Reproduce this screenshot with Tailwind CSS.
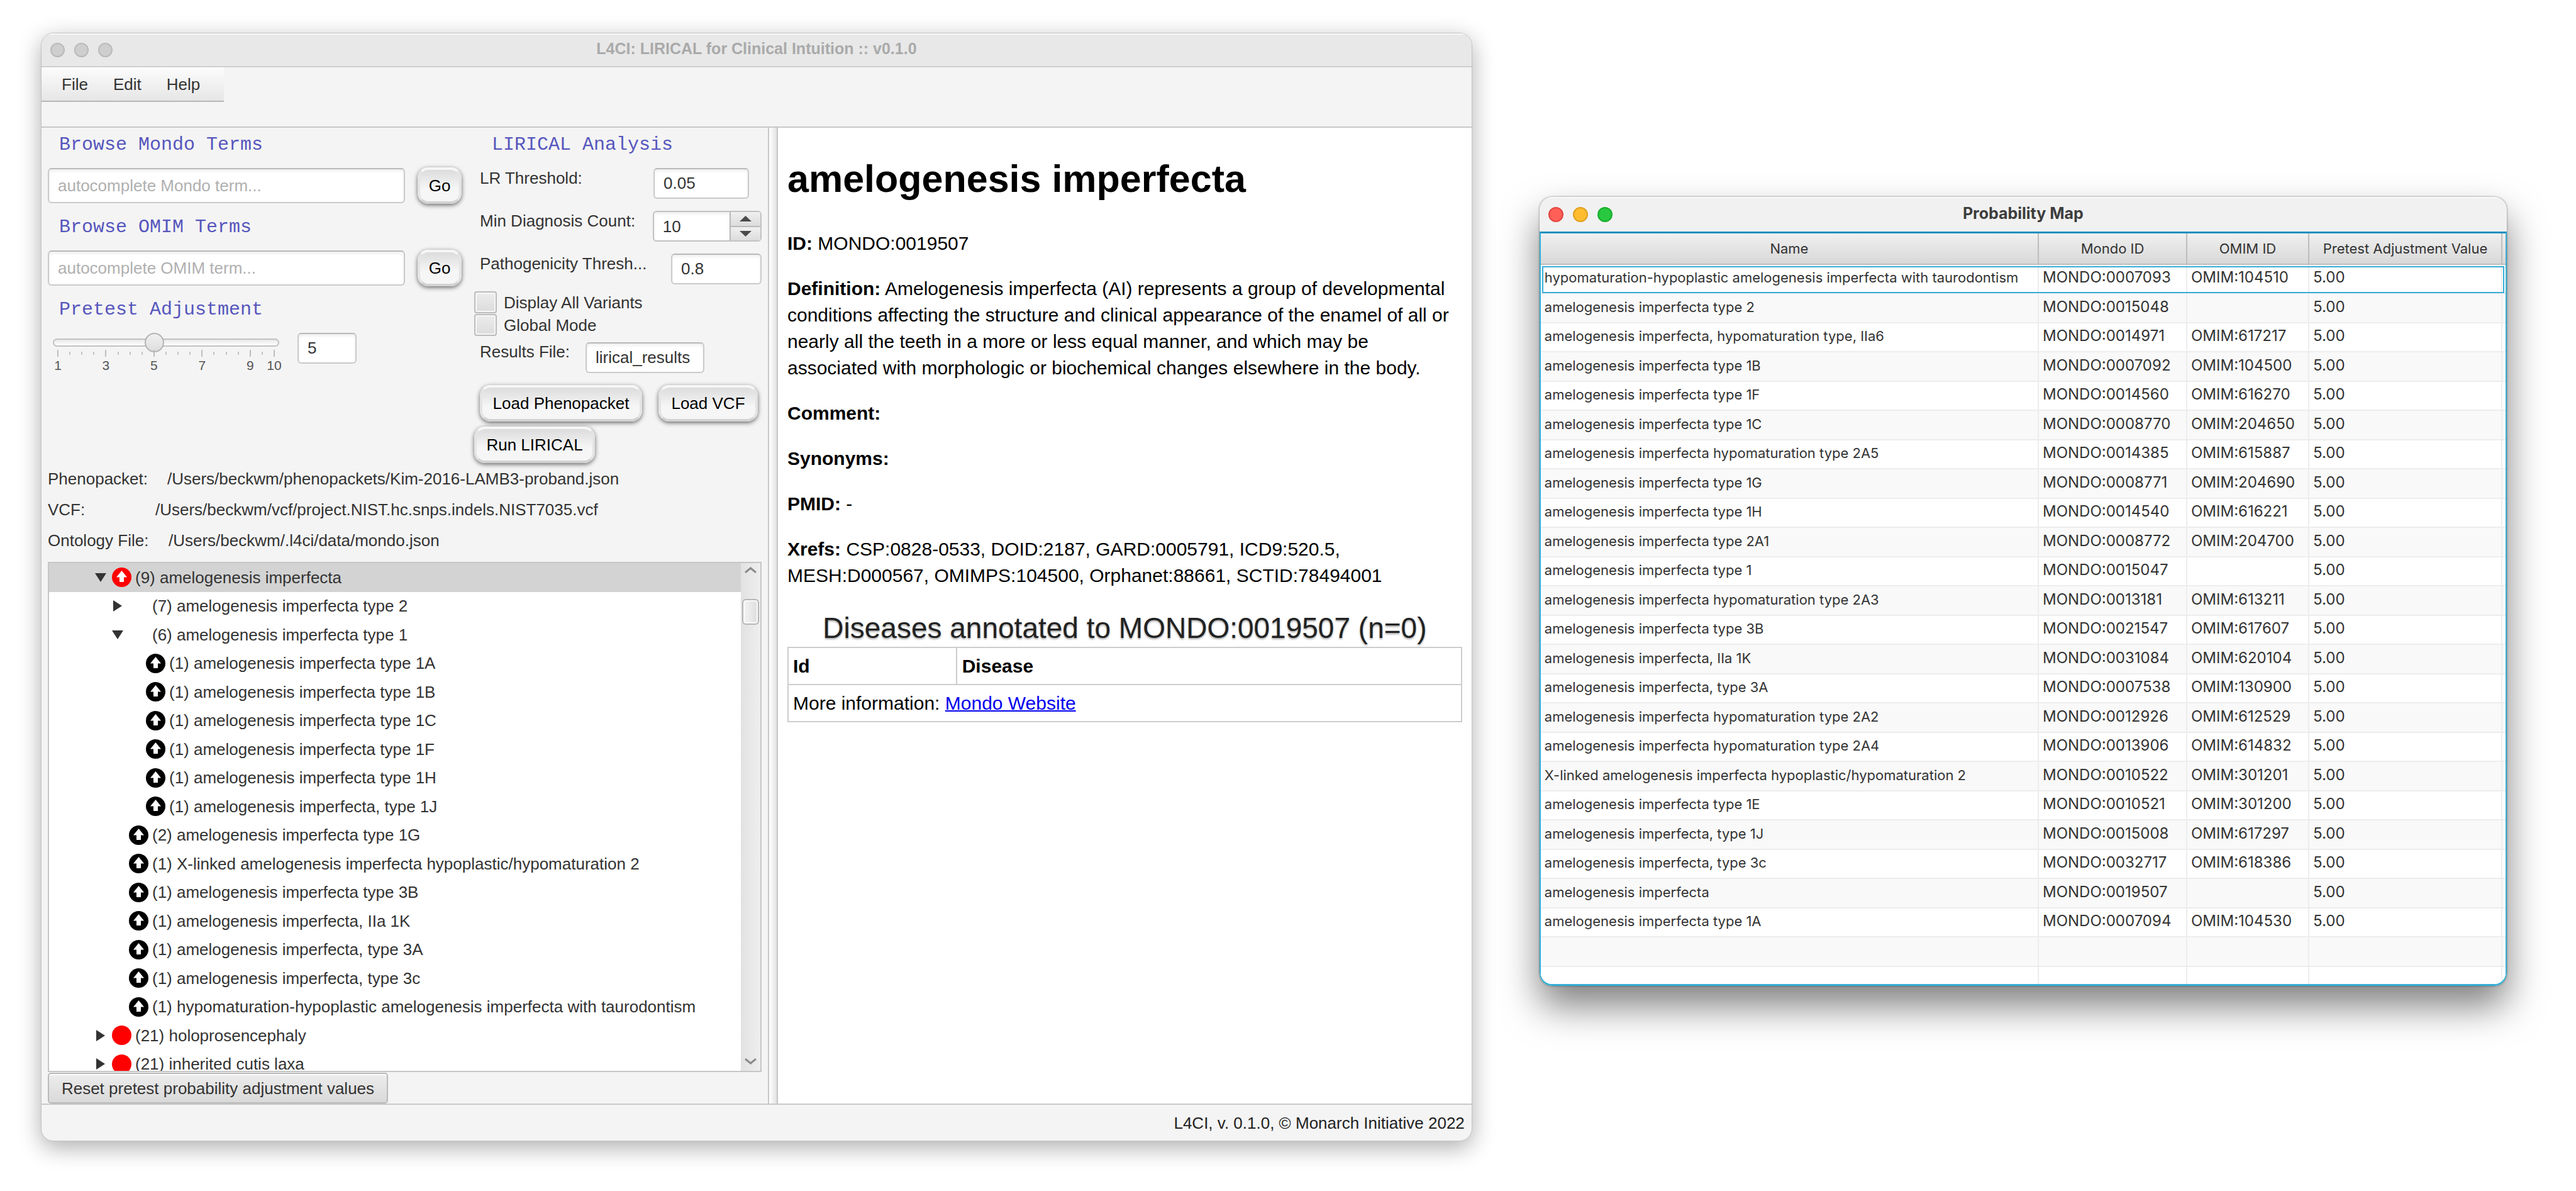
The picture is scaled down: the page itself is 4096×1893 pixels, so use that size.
<!DOCTYPE html>
<html lang="en">
<head>
<meta charset="utf-8">
<title>L4CI: LIRICAL for Clinical Intuition</title>
<script src="https://cdn.jsdelivr.net/npm/@tailwindcss/browser@4"></script>
</head>
<body class="min-h-screen bg-white flex items-start gap-[107px] pl-[65px] pr-[110px] pt-[52px] pb-20 font-['Liberation_Sans',Arial,sans-serif] text-[26px] leading-[30px] text-[#333]">

<!-- Main window -->
<section aria-label="L4CI" class="flex-[2275] min-w-0 rounded-[20px] border border-[#c2c2c2] bg-[#f4f4f4] overflow-hidden shadow-[0_10px_36px_rgba(0,0,0,0.32)]">
  <header class="h-[54px] border-b-2 border-[#cfcfcf] bg-[#e8e8e8] shadow-[inset_0_2px_0_#f8f8f8] grid grid-cols-[1fr_auto_1fr] items-center px-[14px] pb-1">
    <div class="flex gap-[15px] pt-1">
      <span class="size-[23px] rounded-full bg-[#cecece] border-2 border-[#bababa]"></span>
      <span class="size-[23px] rounded-full bg-[#cecece] border-2 border-[#bababa]"></span>
      <span class="size-[23px] rounded-full bg-[#cecece] border-2 border-[#bababa]"></span>
    </div>
    <h2 class="text-[25px] font-bold text-[#aaa]">L4CI: LIRICAL for Clinical Intuition :: v0.1.0</h2>
  </header>

  <div class="h-[94px]">
    <nav class="w-[290px] h-[55px] border-b-2 border-[#b8b8b8] bg-linear-to-b from-[#fcfcfc] to-[#e6e6e6] flex items-center gap-10 pl-[32px]">
      <button type="button">File</button>
      <button type="button">Edit</button>
      <button type="button">Help</button>
    </nav>
  </div>

  <main class="flex border-t-2 border-[#c8c8c8]">
    <!-- Controls -->
    <div class="w-[1155px] shrink-0 px-[10px] pt-[10px]">
      <div class="flex gap-[20px]">
        <form class="w-[658px]">
          <h3 class="pl-[18px] font-['Liberation_Mono',monospace] text-[30px] leading-[34px] text-[#5656bd]"><label for="mondo">Browse Mondo Terms</label></h3>
          <div class="mt-5 flex items-center justify-between h-[56px]">
            <input id="mondo" type="text" placeholder="autocomplete Mondo term..." class="w-[568px] h-[56px] rounded-[6px] border-2 border-[#cacaca] border-t-[#b9b9b9] bg-white px-[14px] placeholder:text-[#b0b0b0] shadow-[inset_0_3px_5px_rgba(0,0,0,0.07)]">
            <button type="button" class="w-[70px] h-[58px] rounded-[17px] border-4 border-t-[#f6f6f6] border-x-[#e4e4e4] border-b-[#d2d2d2] bg-linear-to-b from-[#dcdcdc] to-[#f6f6f6] to-60% text-black shadow-[0_2px_7px_rgba(0,0,0,0.6)]">Go</button>
          </div>
          <h3 class="mt-[21px] pl-[18px] font-['Liberation_Mono',monospace] text-[30px] leading-[34px] text-[#5656bd]"><label for="omim">Browse OMIM Terms</label></h3>
          <div class="mt-5 flex items-center justify-between h-[56px]">
            <input id="omim" type="text" placeholder="autocomplete OMIM term..." class="w-[568px] h-[56px] rounded-[6px] border-2 border-[#cacaca] border-t-[#b9b9b9] bg-white px-[14px] placeholder:text-[#b0b0b0] shadow-[inset_0_3px_5px_rgba(0,0,0,0.07)]">
            <button type="button" class="w-[70px] h-[58px] rounded-[17px] border-4 border-t-[#f6f6f6] border-x-[#e4e4e4] border-b-[#d2d2d2] bg-linear-to-b from-[#dcdcdc] to-[#f6f6f6] to-60% text-black shadow-[0_2px_7px_rgba(0,0,0,0.6)]">Go</button>
          </div>
          <h3 class="mt-[21px] pl-[18px] font-['Liberation_Mono',monospace] text-[30px] leading-[34px] text-[#5656bd]"><label for="adjust">Pretest Adjustment</label></h3>
          <div class="mt-5 flex items-start pl-2">
            <div class="w-[360px]">
              <input id="adjust" type="range" min="1" max="10" value="5" class="block w-full h-[31px] appearance-none bg-transparent [&::-webkit-slider-runnable-track]:h-[13px] [&::-webkit-slider-runnable-track]:rounded-full [&::-webkit-slider-runnable-track]:border-2 [&::-webkit-slider-runnable-track]:border-[#c2c2c2] [&::-webkit-slider-runnable-track]:bg-linear-to-b [&::-webkit-slider-runnable-track]:from-[#e8e8e8] [&::-webkit-slider-runnable-track]:to-white [&::-webkit-slider-thumb]:appearance-none [&::-webkit-slider-thumb]:size-[31px] [&::-webkit-slider-thumb]:-mt-[11px] [&::-webkit-slider-thumb]:rounded-full [&::-webkit-slider-thumb]:border-2 [&::-webkit-slider-thumb]:border-[#b4b4b4] [&::-webkit-slider-thumb]:bg-linear-to-b [&::-webkit-slider-thumb]:from-[#f0f0f0] [&::-webkit-slider-thumb]:to-[#dedede]">
              <ol id="ticks" class="mt-[-4px] mx-[7px] flex justify-between items-start text-[21px] leading-6 text-[#555]"></ol>
            </div>
            <input type="text" value="5" aria-label="Adjustment value" class="ml-[29px] w-[94px] h-[49px] rounded-[6px] border-2 border-[#cacaca] border-t-[#b9b9b9] bg-white px-[14px] shadow-[inset_0_3px_5px_rgba(0,0,0,0.07)]">
          </div>
        </form>

        <form class="w-[457px]">
          <h3 class="pl-[28px] font-['Liberation_Mono',monospace] text-[30px] leading-[34px] text-[#5656bd]">LIRICAL Analysis</h3>
          <div class="mt-5 pl-[9px] flex flex-col gap-[19px]">
            <div class="flex items-start">
              <label for="lr" class="w-[276px] pt-px">LR Threshold:</label>
              <input id="lr" type="text" value="0.05" class="w-[152px] h-[49px] rounded-[6px] border-2 border-[#cacaca] border-t-[#b9b9b9] bg-white px-[14px] shadow-[inset_0_3px_5px_rgba(0,0,0,0.07)]">
            </div>
            <div class="flex items-start">
              <label for="mindx" class="w-[276px] pt-px">Min Diagnosis Count:</label>
              <div class="flex w-[174px] h-[49px] rounded-[6px] border-2 border-[#c2c2c2] bg-white overflow-hidden">
                <input id="mindx" type="text" inputmode="numeric" value="10" class="w-[120px] px-[14px] shadow-[inset_0_3px_5px_rgba(0,0,0,0.07)]">
                <div class="flex-1 border-l-2 border-[#bababa] flex flex-col">
                  <button type="button" aria-label="Increase" class="flex-1 border-b-2 border-[#bababa] bg-linear-to-b from-[#f0f0f0] to-[#dcdcdc] flex items-center justify-center"><svg class="w-[19px] h-[9px]" viewBox="0 0 19 9"><path d="M0 9L9.500 0L19 9z" fill="#4a4a4a"/></svg></button>
                  <button type="button" aria-label="Decrease" class="flex-1 bg-linear-to-b from-[#f0f0f0] to-[#dcdcdc] flex items-center justify-center"><svg class="w-[19px] h-[9px]" viewBox="0 0 19 9"><path d="M0 0H19L9.500 9z" fill="#4a4a4a"/></svg></button>
                </div>
              </div>
            </div>
            <div class="flex items-start">
              <label for="path" class="w-[306px] pt-px">Pathogenicity Thresh...</label>
              <input id="path" type="text" value="0.8" class="w-[144px] h-[49px] rounded-[6px] border-2 border-[#cacaca] border-t-[#b9b9b9] bg-white px-[14px] shadow-[inset_0_3px_5px_rgba(0,0,0,0.07)]">
            </div>
          </div>
          <div class="mt-[11px] flex flex-col gap-px">
            <label class="flex items-center gap-[11px]"><input type="checkbox" class="appearance-none w-[36px] h-[35px] rounded-[4px] border-2 border-[#bcbcbc] bg-linear-to-b from-[#ececec] to-[#dcdcdc] shadow-[inset_0_0_0_2px_#f6f6f6]">Display All Variants</label>
            <label class="flex items-center gap-[11px]"><input type="checkbox" class="appearance-none w-[36px] h-[35px] rounded-[4px] border-2 border-[#bcbcbc] bg-linear-to-b from-[#ececec] to-[#dcdcdc] shadow-[inset_0_0_0_2px_#f6f6f6]">Global Mode</label>
          </div>
          <div class="mt-[10px] pl-[9px] flex items-start">
            <label for="results" class="w-[168px]">Results File:</label>
            <input id="results" type="text" value="lirical_results" class="w-[189px] h-[49px] rounded-[6px] border-2 border-[#cacaca] border-t-[#b9b9b9] bg-white px-[14px] shadow-[inset_0_3px_5px_rgba(0,0,0,0.07)]">
          </div>
          <div class="mt-[19px] pl-[9px] flex gap-[26px]">
            <button type="button" class="w-[258px] h-[58px] rounded-[17px] border-4 border-t-[#f6f6f6] border-x-[#e4e4e4] border-b-[#d2d2d2] bg-linear-to-b from-[#dcdcdc] to-[#f6f6f6] to-60% text-black whitespace-nowrap shadow-[0_2px_7px_rgba(0,0,0,0.6)]">Load Phenopacket</button>
            <button type="button" class="w-[158px] h-[58px] rounded-[17px] border-4 border-t-[#f6f6f6] border-x-[#e4e4e4] border-b-[#d2d2d2] bg-linear-to-b from-[#dcdcdc] to-[#f6f6f6] to-60% text-black whitespace-nowrap shadow-[0_2px_7px_rgba(0,0,0,0.6)]">Load VCF</button>
          </div>
          <button type="button" class="mt-[8px] w-[192px] h-[58px] rounded-[17px] border-4 border-t-[#f6f6f6] border-x-[#e4e4e4] border-b-[#d2d2d2] bg-linear-to-b from-[#dcdcdc] to-[#f6f6f6] to-60% text-black whitespace-nowrap shadow-[0_2px_7px_rgba(0,0,0,0.6)]">Run LIRICAL</button>
        </form>
      </div>

      <dl class="mt-[10px] flex flex-col gap-[19px]">
        <div class="flex"><dt class="w-[190px]">Phenopacket:</dt><dd>/Users/beckwm/phenopackets/Kim-2016-LAMB3-proband.json</dd></div>
        <div class="flex"><dt class="w-[171px]">VCF:</dt><dd>/Users/beckwm/vcf/project.NIST.hc.snps.indels.NIST7035.vcf</dd></div>
        <div class="flex"><dt class="w-[192px]">Ontology File:</dt><dd>/Users/beckwm/.l4ci/data/mondo.json</dd></div>
      </dl>

      <!-- Ontology tree -->
      <div class="mt-[19px] h-[811px] flex border-2 border-[#c6c6c6] bg-white overflow-hidden">
        <ul id="tree" role="tree" class="flex-1 h-[819px] grid grid-rows-[repeat(18,1fr)]"></ul>
        <div class="w-[31px] bg-linear-to-r from-[#e2e2e2] to-[#eeeeee] flex flex-col items-center pt-[6px] pb-[10px]">
          <svg class="w-[19px] h-[10px]" viewBox="0 0 19 10" fill="none" stroke="#8a8a8a" stroke-width="3"><path d="M1 9L9.500 2L18 9"/></svg>
          <div class="mt-[41px] w-[27px] h-[41px] rounded-[6px] border-2 border-[#b5b5b5] bg-linear-to-r from-[#f4f4f4] to-[#dedede] shadow-[inset_0_0_0_2px_#fafafa]"></div>
          <svg class="mt-auto w-[19px] h-[10px]" viewBox="0 0 19 10" fill="none" stroke="#8a8a8a" stroke-width="3"><path d="M1 1L9.500 8L18 1"/></svg>
        </div>
      </div>
      <button type="button" class="mt-px block w-[541px] h-[49px] rounded-[5px] border-2 border-[#bababa] bg-linear-to-b from-[#ededed] to-[#d9d9d9] shadow-[inset_0_2px_0_#fafafa] whitespace-nowrap">Reset pretest probability adjustment values</button>
    </div>

    <div class="w-4 shrink-0 border-x-2 border-[#c6c6c6] bg-linear-to-r from-white to-[#e2e2e2]"></div>

    <!-- Term description -->
    <article class="flex-1 min-w-0 bg-white px-[15px] pt-[47px] text-[30px] leading-[42px] text-black">
      <h1 class="text-[61px] leading-[68px] font-bold">amelogenesis imperfecta</h1>
      <div class="mt-12 flex flex-col gap-[30px]">
        <p><b>ID:</b> MONDO:0019507</p>
        <p><b>Definition:</b> Amelogenesis imperfecta (AI) represents a group of developmental conditions affecting the structure and clinical appearance of the enamel of all or nearly all the teeth in a more or less equal manner, and which may be associated with morphologic or biochemical changes elsewhere in the body.</p>
        <p><b>Comment:</b></p>
        <p><b>Synonyms:</b></p>
        <p><b>PMID:</b> -</p>
        <p><b>Xrefs:</b> CSP:0828-0533, DOID:2187, GARD:0005791, ICD9:520.5, MESH:D000567, OMIMPS:104500, Orphanet:88661, SCTID:78494001</p>
      </div>
      <table class="mt-9 w-full border-collapse text-left table-fixed">
        <caption class="pb-1 text-[46px] leading-[52px] text-[#222] [text-shadow:0_2px_3px_rgba(0,0,0,0.35)]">Diseases annotated to MONDO:0019507 (n=0)</caption>
        <thead><tr class="h-[59px]"><th class="w-1/4 border-2 border-[#cdcdcd] px-[7px] font-bold">Id</th><th class="border-2 border-[#cdcdcd] px-[8px] font-bold">Disease</th></tr></thead>
        <tbody><tr class="h-[59px]"><td colspan="2" class="border-2 border-[#cdcdcd] px-[7px]">More information: <a href="#" class="text-[#0000ee] underline decoration-2">Mondo Website</a></td></tr></tbody>
      </table>
    </article>
  </main>

  <footer class="h-[59px] border-t-2 border-[#c8c8c8] flex items-center justify-end pr-[11px] text-[#222]">L4CI, v. 0.1.0, © Monarch Initiative 2022</footer>
</section>

<!-- Probability map window -->
<section aria-label="Probability Map" class="flex-[1539] min-w-0 mt-[261px] rounded-[20px] overflow-hidden bg-[#f1f1f1] font-[Inter,sans-serif] shadow-[0_32px_60px_rgba(0,0,0,0.5),0_0_3px_rgba(0,0,0,0.5)]">
  <header class="h-[55px] shadow-[inset_0_2px_0_#fbfbfb] grid grid-cols-[1fr_auto_1fr] items-center px-[14px]">
    <div class="flex gap-[15px]">
      <span class="size-6 rounded-full bg-[#ff5f57] border-2 border-[#e2463f]"></span>
      <span class="size-6 rounded-full bg-[#febc2e] border-2 border-[#e0a01f]"></span>
      <span class="size-6 rounded-full bg-[#28c840] border-2 border-[#18ad2b]"></span>
    </div>
    <h2 class="text-[25px] font-bold text-[#3d3d3d] pb-1">Probability Map</h2>
  </header>
  <div class="h-[1199px] overflow-hidden rounded-b-[20px] border-x-2 border-y-3 border-[#35aed6] border-t-[#1b8fc0] bg-white">
    <table class="w-full table-fixed border-separate border-spacing-0 text-left text-[24px]">
      <colgroup><col><col class="w-[236px]"><col class="w-[194px]"><col class="w-[307px]"><col class="w-[5px]"></colgroup>
      <thead>
        <tr class="h-[50px] text-[22px] text-center bg-linear-to-b from-[#f0f0f0] to-[#d7d7d7]">
          <th class="p-0 font-normal border-r-2 border-b-2 border-[#bdbdbd]">Name</th>
          <th class="p-0 font-normal border-r-2 border-b-2 border-[#bdbdbd]">Mondo ID</th>
          <th class="p-0 font-normal border-r-2 border-b-2 border-[#bdbdbd]">OMIM ID</th>
          <th class="p-0 font-normal border-r-2 border-b-2 border-[#bdbdbd]">Pretest Adjustment Value</th>
          <td class="p-0 border-b-2 border-[#bdbdbd]"></td>
        </tr>
      </thead>
      <tbody id="rows"></tbody>
    </table>
  </div>
</section>

<script>
// Slider scale: one tick per half step, labelled at 1, 3, 5, 7, 9 and 10
const labels = {0: '1', 4: '3', 8: '5', 12: '7', 16: '9', 18: '10'};
let ticks = '';
for (let i = 0; i < 19; i++) {
  ticks += labels[i]
    ? `<li class="w-[2px] flex flex-col items-center"><span class="w-[2px] h-[11px] bg-[#bdbdbd]"></span><span class="mt-0.5">${labels[i]}</span></li>`
    : '<li class="w-[2px] h-[5px] mt-[3px] bg-[#c4c4c4]"></li>';
}
document.getElementById('ticks').innerHTML = ticks;

// Tree rows: [depth, arrow, icon, label]
const tree = [
  [0, 'open', 'red-up', '(9) amelogenesis imperfecta'],
  [1, 'closed', '', '(7) amelogenesis imperfecta type 2'],
  [1, 'open', '', '(6) amelogenesis imperfecta type 1'],
  [2, '', 'up', '(1) amelogenesis imperfecta type 1A'],
  [2, '', 'up', '(1) amelogenesis imperfecta type 1B'],
  [2, '', 'up', '(1) amelogenesis imperfecta type 1C'],
  [2, '', 'up', '(1) amelogenesis imperfecta type 1F'],
  [2, '', 'up', '(1) amelogenesis imperfecta type 1H'],
  [2, '', 'up', '(1) amelogenesis imperfecta, type 1J'],
  [1, '', 'up', '(2) amelogenesis imperfecta type 1G'],
  [1, '', 'up', '(1) X-linked amelogenesis imperfecta hypoplastic/hypomaturation 2'],
  [1, '', 'up', '(1) amelogenesis imperfecta type 3B'],
  [1, '', 'up', '(1) amelogenesis imperfecta, IIa 1K'],
  [1, '', 'up', '(1) amelogenesis imperfecta, type 3A'],
  [1, '', 'up', '(1) amelogenesis imperfecta, type 3c'],
  [1, '', 'up', '(1) hypomaturation-hypoplastic amelogenesis imperfecta with taurodontism'],
  [0, 'closed', 'red', '(21) holoprosencephaly'],
  [0, 'closed', 'red', '(21) inherited cutis laxa'],
];
const pads = ['pl-[69px]', 'pl-[96px]', 'pl-[123px]'];
const arrows = {
  open: '<svg class="w-[18px] h-[14px]" viewBox="0 0 18 14"><path d="M0 0H18L9 14z" fill="#333"/></svg>',
  closed: '<svg class="w-[14px] h-[18px]" viewBox="0 0 14 18"><path d="M0 0L14 9L0 18z" fill="#333"/></svg>',
};
const up = '<path d="M15.500 5L24 15.500H19V23H12V15.500H7z" fill="#fff"/>';
const icons = {
  'red-up': `<circle cx="15.500" cy="15.500" r="15.500" fill="#f00"/>${up}`,
  'up': `<circle cx="15.500" cy="15.500" r="15.500" fill="#000"/>${up}`,
  'red': '<circle cx="15.500" cy="15.500" r="15.500" fill="#f00"/>',
};
document.getElementById('tree').innerHTML = tree.map(([d, a, ic, t], i) => `
  <li role="treeitem" class="flex items-center whitespace-nowrap ${pads[d]} ${i ? '' : 'bg-[#d3d3d3]'}">
    <span class="w-[26px] mr-[5px] flex justify-center">${arrows[a] || ''}</span>
    <svg class="size-[31px] mr-[6px]" viewBox="0 0 31 31">${icons[ic] || ''}</svg>${t}
  </li>`).join('');

// Probability map
const data = [
  ['hypomaturation-hypoplastic amelogenesis imperfecta with taurodontism', '0007093', '104510'],
  ['amelogenesis imperfecta type 2', '0015048', ''],
  ['amelogenesis imperfecta, hypomaturation type, IIa6', '0014971', '617217'],
  ['amelogenesis imperfecta type 1B', '0007092', '104500'],
  ['amelogenesis imperfecta type 1F', '0014560', '616270'],
  ['amelogenesis imperfecta type 1C', '0008770', '204650'],
  ['amelogenesis imperfecta hypomaturation type 2A5', '0014385', '615887'],
  ['amelogenesis imperfecta type 1G', '0008771', '204690'],
  ['amelogenesis imperfecta type 1H', '0014540', '616221'],
  ['amelogenesis imperfecta type 2A1', '0008772', '204700'],
  ['amelogenesis imperfecta type 1', '0015047', ''],
  ['amelogenesis imperfecta hypomaturation type 2A3', '0013181', '613211'],
  ['amelogenesis imperfecta type 3B', '0021547', '617607'],
  ['amelogenesis imperfecta, IIa 1K', '0031084', '620104'],
  ['amelogenesis imperfecta, type 3A', '0007538', '130900'],
  ['amelogenesis imperfecta hypomaturation type 2A2', '0012926', '612529'],
  ['amelogenesis imperfecta hypomaturation type 2A4', '0013906', '614832'],
  ['X-linked amelogenesis imperfecta hypoplastic/hypomaturation 2', '0010522', '301201'],
  ['amelogenesis imperfecta type 1E', '0010521', '301200'],
  ['amelogenesis imperfecta, type 1J', '0015008', '617297'],
  ['amelogenesis imperfecta, type 3c', '0032717', '618386'],
  ['amelogenesis imperfecta', '0019507', ''],
  ['amelogenesis imperfecta type 1A', '0007094', '104530'],
  ['', '', ''],
  ['', '', ''],
];
const cell = 'p-0 pl-[6px] pb-1 border-r-2 border-b-2 border-[#ededed] whitespace-nowrap';
const focusRing = '<span class="absolute inset-x-[2px] top-[2px] bottom-[1px] border-2 border-[#39aed6]"></span>';
document.getElementById('rows').innerHTML = data.map(([n, m, o], i) => `
  <tr class="${i % 2 ? 'h-[47px] bg-[#f9f9f9]' : 'h-[46px] bg-white'} ${i ? '' : 'relative'}">
    <td class="${cell} text-[22px]">${n}${i ? '' : focusRing}</td>
    <td class="${cell}">${m && 'MONDO:' + m}</td>
    <td class="${cell}">${o && 'OMIM:' + o}</td>
    <td class="${cell}">${n && '5.00'}</td>
    <td class="p-0 border-b-2 border-[#ededed]"></td>
  </tr>`).join('');
</script>
</body>
</html>
